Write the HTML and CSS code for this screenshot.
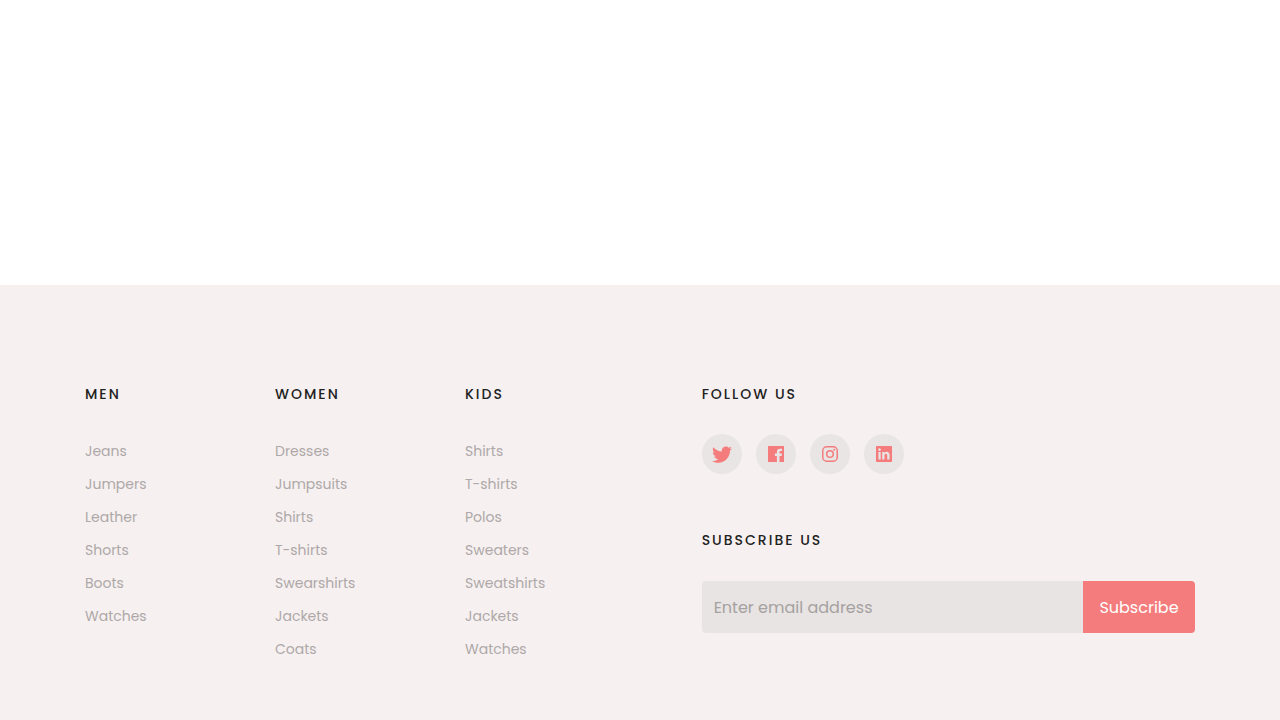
FILE: index.html
```
<!DOCTYPE html>
<html lang="en">
<head>
    <meta charset="UTF-8">
    <meta name="viewport" content="width=device-width, initial-scale=1.0">
    <title>Shop</title>
    <link rel="stylesheet" href="styles.css">
</head>
<body>
    <main class="content"></main>

    <footer class="footer">
        <div class="container">
            <!-- Shop links -->
            <nav class="footer-links" aria-label="Shop">
                <div>
                    <h3>Men</h3>
                    <ul>
                        <li><a href="#">Jeans</a></li>
                        <li><a href="#">Jumpers</a></li>
                        <li><a href="#">Leather</a></li>
                        <li><a href="#">Shorts</a></li>
                        <li><a href="#">Boots</a></li>
                        <li><a href="#">Watches</a></li>
                    </ul>
                </div>
                <div>
                    <h3>Women</h3>
                    <ul>
                        <li><a href="#">Dresses</a></li>
                        <li><a href="#">Jumpsuits</a></li>
                        <li><a href="#">Shirts</a></li>
                        <li><a href="#">T-shirts</a></li>
                        <li><a href="#">Swearshirts</a></li>
                        <li><a href="#">Jackets</a></li>
                        <li><a href="#">Coats</a></li>
                    </ul>
                </div>
                <div>
                    <h3>Kids</h3>
                    <ul>
                        <li><a href="#">Shirts</a></li>
                        <li><a href="#">T-shirts</a></li>
                        <li><a href="#">Polos</a></li>
                        <li><a href="#">Sweaters</a></li>
                        <li><a href="#">Sweatshirts</a></li>
                        <li><a href="#">Jackets</a></li>
                        <li><a href="#">Watches</a></li>
                    </ul>
                </div>
            </nav>

            <!-- Social and newsletter -->
            <div class="footer-side">
                <h3>Follow us</h3>
                <ul class="social">
                    <li><a href="#" aria-label="Twitter">
                        <svg width="20" height="20" viewBox="0 0 32 32"><path d="M32 7.075c-1.175.525-2.444.875-3.769 1.031 1.356-.813 2.394-2.1 2.887-3.631-1.269.75-2.675 1.3-4.169 1.594-1.2-1.275-2.906-2.069-4.794-2.069-3.625 0-6.563 2.938-6.563 6.563 0 .512.056 1.012.169 1.494-5.456-.275-10.294-2.888-13.531-6.862-.563.969-.887 2.1-.887 3.3 0 2.275 1.156 4.287 2.919 5.463-1.075-.031-2.087-.331-2.975-.819v.081c0 3.181 2.263 5.838 5.269 6.437-.55.15-1.131.231-1.731.231-.425 0-.831-.044-1.237-.119.838 2.606 3.263 4.506 6.131 4.563-2.25 1.762-5.075 2.813-8.156 2.813-.531 0-1.05-.031-1.569-.094 2.913 1.869 6.362 2.95 10.069 2.95 12.075 0 18.681-10.006 18.681-18.681 0-.287-.006-.569-.019-.85 1.281-.919 2.394-2.075 3.275-3.394z"/></svg>
                    </a></li>
                    <li><a href="#" aria-label="Facebook">
                        <svg width="16" height="16" viewBox="0 0 16 16"><path d="M0 0h16v16h-4.500v-6h2.100l.4-2.400h-2.500v-1.400c0-.8.400-1.200 1.200-1.200h1.300v-2.300h-2c-2 0-3.100 1.200-3.100 3.100v1.800h-2v2.400h2v6h-8.900z"/></svg>
                    </a></li>
                    <li><a href="#" aria-label="Instagram">
                        <svg width="16" height="16" viewBox="0 0 16 16"><rect class="line" x=".75" y=".75" width="14.500" height="14.500" rx="4"/><circle class="line" cx="8" cy="8" r="3.300"/><circle cx="12.200" cy="3.800" r="1"/></svg>
                    </a></li>
                    <li><a href="#" aria-label="LinkedIn">
                        <svg width="16" height="16" viewBox="0 0 16 16"><path fill-rule="evenodd" d="M.8 0h14.400q.8 0 .8.800v14.400q0 .8-.8.800h-14.400q-.8 0-.8-.8v-14.400q0-.8.800-.8zM2.400 6v7.500h2.300v-7.500zM3.550 2.300a1.350 1.350 0 1 0 .01 0zM6.200 6v7.500h2.300v-3.800c0-1.200.5-1.900 1.400-1.900s1.300.7 1.300 1.800v3.900h2.400v-4.300c0-2.200-1.100-3.400-2.800-3.400-1.100 0-1.900.5-2.300 1.200v-1z"/></svg>
                    </a></li>
                </ul>

                <h3><label for="email">Subscribe us</label></h3>
                <form class="subscribe">
                    <input type="email" id="email" placeholder="Enter email address">
                    <button type="submit">Subscribe</button>
                </form>
            </div>
        </div>
    </footer>
</body>
</html>
```
FILE: styles.css
```
* { box-sizing: border-box; }
body { margin: 0; min-height: 100vh; display: flex; flex-direction: column; font-family: Poppins, Inter, sans-serif; background: #fff; color: #222; }
ul { list-style: none; margin: 0; padding: 0; }
.content { min-height: 285px; }

.footer { flex: 1; background: #f6f0f0; padding: 99px 0 56px; }
.container { max-width: 1140px; margin: 0 auto; padding: 0 15px; display: grid; grid-template-columns: 5fr 4fr; }
.footer h3 { margin: 0 0 35px; font-size: 14px; line-height: 20px; font-weight: 500; letter-spacing: 2px; text-transform: uppercase; }
.footer-links { display: grid; grid-template-columns: repeat(3, 190px); }
.footer-links li { margin-bottom: 8px; font-size: 14px; line-height: 25px; font-weight: 400; }
.footer-links a { color: #aea8a8; text-decoration: none; }

.footer .social { display: flex; gap: 14px; margin: -5px 0 56px; }
.social a { display: flex; align-items: center; justify-content: center; width: 40px; height: 40px; border-radius: 50%; background: #e8e5e4; }
.social svg { fill: #f47c7c; }
.social .line { fill: none; stroke: #f47c7c; stroke-width: 1.5; }

.footer .footer-side h3:nth-of-type(2) { margin-bottom: 31px; }
.subscribe { display: flex; height: 52px; }
.subscribe input { flex: 1; min-width: 0; padding: 0 12px; border: 0; border-radius: 4px 0 0 4px; background: #e7e4e3; color: #222; font: 400 16px Poppins, Inter, sans-serif; }
.subscribe input::placeholder { color: #a5a1a0; opacity: 1; }
.subscribe button { width: 112px; padding: 0; border: 0; border-radius: 0 4px 4px 0; background: #f47c7c; color: #fff; font: 400 16px Poppins, Inter, sans-serif; cursor: pointer; }

@media (max-width: 1100px) {
    .container { grid-template-columns: 1fr; gap: 40px; }
    .footer-links { grid-template-columns: repeat(3, 1fr); }
}
```
